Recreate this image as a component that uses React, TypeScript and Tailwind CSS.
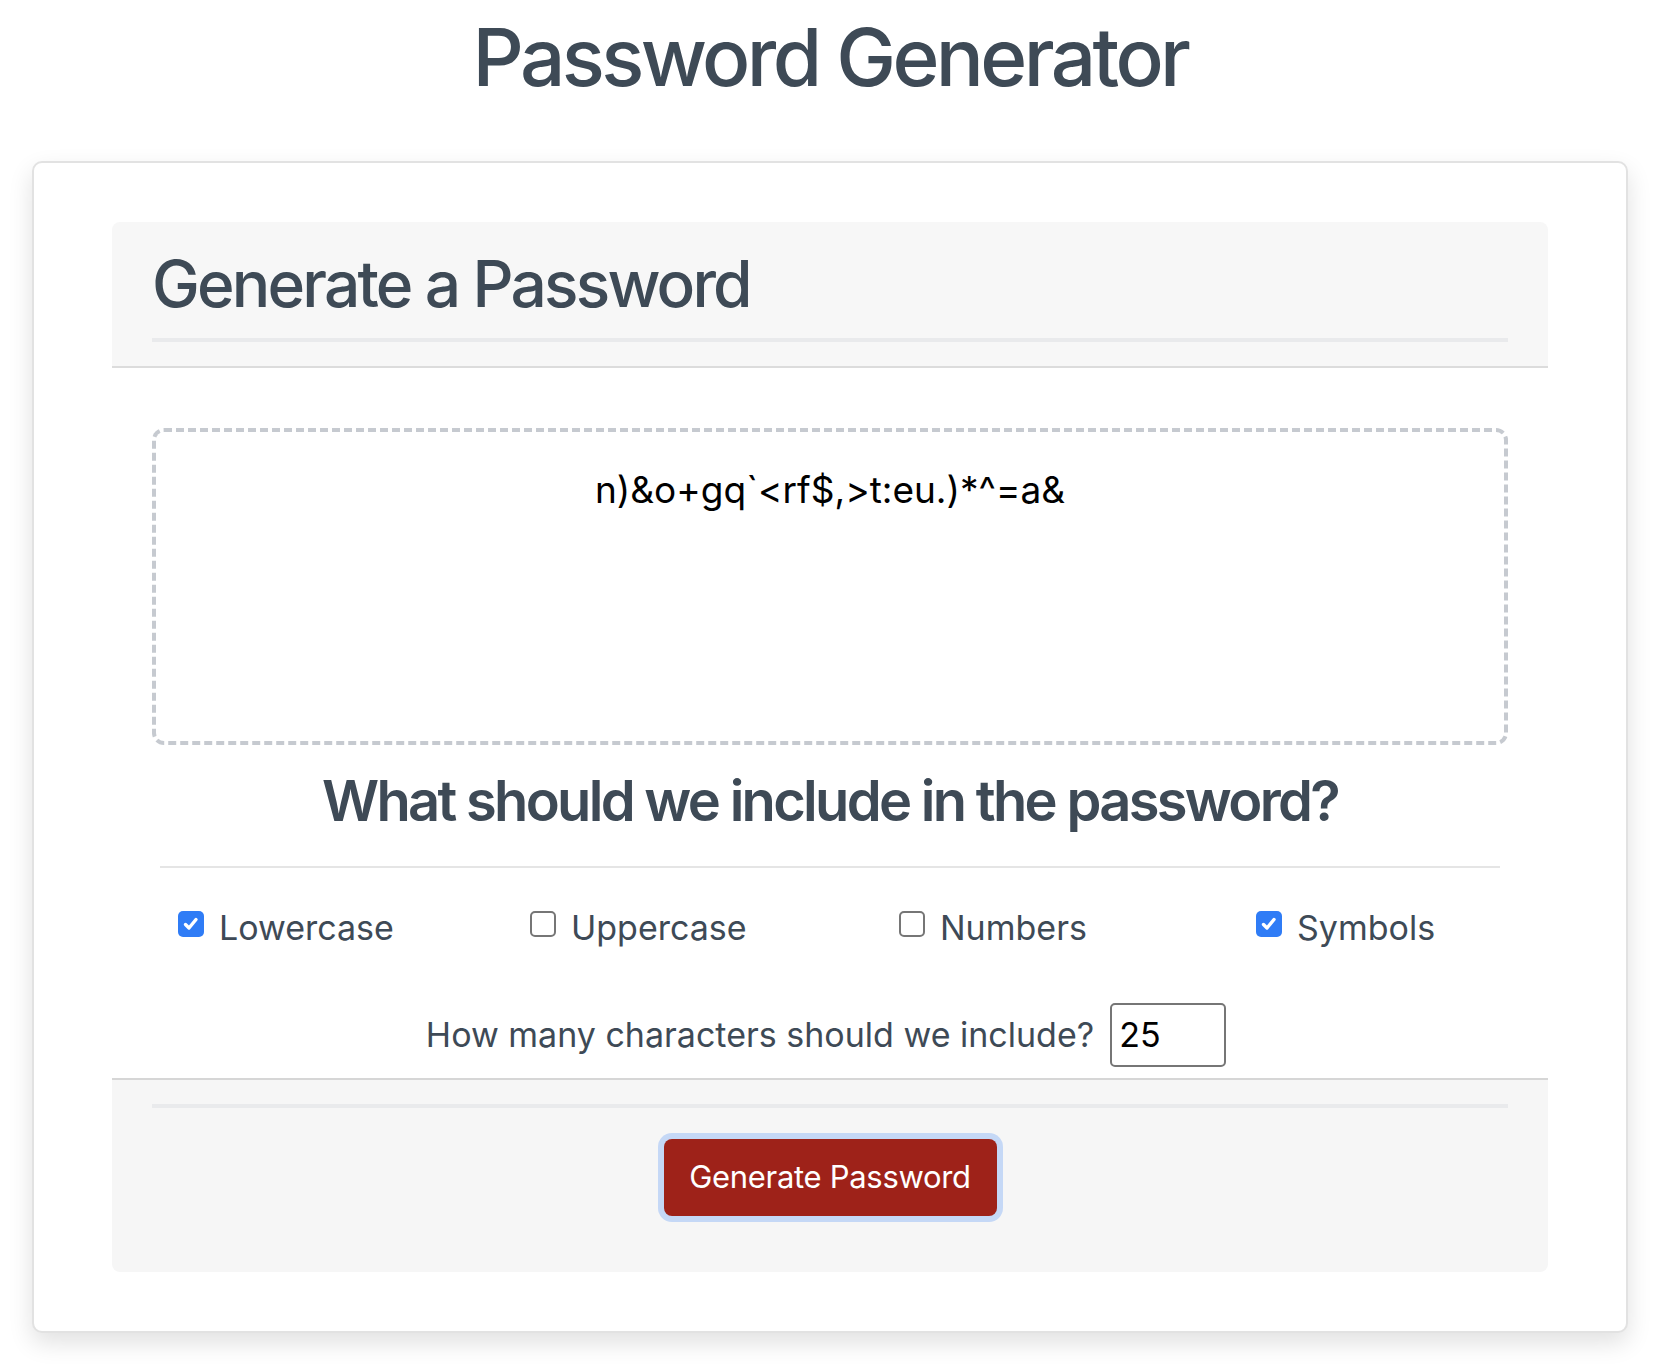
import React from "react";

const options = [
  { label: "Lowercase", checked: true },
  { label: "Uppercase", checked: false },
  { label: "Numbers", checked: false },
  { label: "Symbols", checked: true },
];

function Check({ checked }: { checked: boolean }) {
  if (checked) {
    return (
      <span className="mt-[9px] flex h-[26px] w-[26px] shrink-0 items-center justify-center rounded-[5px] bg-[#2f7cf6]">
        <svg width="18" height="18" viewBox="0 0 18 18" fill="none">
          <path d="M3.5 9.5l3.5 3.5 7-8.5" stroke="white" strokeWidth="3.4" strokeLinecap="round" strokeLinejoin="round" />
        </svg>
      </span>
    );
  }
  return <span className="mt-[9px] h-[26px] w-[26px] shrink-0 rounded-[5px] border-2 border-[#767676] bg-white" />;
}

export default function App() {
  const [length, setLength] = React.useState("25");

  return (
    <div className="min-h-screen bg-white pb-8 font-['Inter','Helvetica',sans-serif] text-[#3e4a56]">
      <h1 className="pt-[9px] text-center text-[80px] font-medium leading-[1.2] tracking-[-0.045em]">Password Generator</h1>

      <div className="mx-[32px] mt-[56px] rounded-[10px] border-2 border-[#e2e2e2] bg-white px-[78px] py-[59px] shadow-[0_10px_24px_rgba(0,0,0,0.12)]">
        {/* header */}
        <div className="rounded-t-[8px] border-b-2 border-[#dcdcdc] bg-[#f7f7f7] px-10 pt-[24px] pb-[24px]">
          <h2 className="text-[64px] font-medium leading-[1.2] tracking-[-0.044em]">Generate a Password</h2>
          <div className="mt-[15px] h-[4px] bg-[#e9eaec]" />
        </div>

        {/* body */}
        <div className="px-10 pt-[60px] pb-[11px]">
          <div className="h-[317px] rounded-xl border-4 border-dashed border-[#c6cad0] pt-[31px] text-center text-[37px] leading-[1.46] text-black">
            n)&amp;o+gq`&lt;rf$,&gt;t:eu.)*^=a&amp;
          </div>

          <h3 className="mt-[23px] text-center text-[56px] font-semibold leading-[1.2] tracking-[-0.048em]">What should we include in the password?</h3>
          <div className="mx-2 mt-[31px] h-[2px] bg-[#e5e5e5]" />

          <div className="mt-[34px] grid grid-cols-[352px_369px_357px_1fr] pl-[26px]">
            {options.map((o) => (
              <label key={o.label} className="flex items-start gap-[15px] text-[34px] leading-[1.5]">
                <Check checked={o.checked} />
                <span>{o.label}</span>
              </label>
            ))}
          </div>

          <div className="mt-[50px] flex items-center justify-center gap-[16px] pr-[8px]">
            <span className="text-[34px] leading-[1.5]">How many characters should we include?</span>
            <input
              value={length}
              onChange={(e) => setLength(e.target.value)}
              className="h-[64px] w-[116px] rounded-[5px] border-2 border-[#767676] pl-[7px] text-[34px] text-black outline-none"
            />
          </div>
        </div>

        {/* footer */}
        <div className="rounded-b-[8px] border-t-2 border-[#d6d6d6] bg-[#f6f6f6] px-10 pt-[24px] pb-[56px]">
          <div className="h-[4px] bg-[#e9eaec]" />
          <div className="mt-[31px] flex justify-center">
            <button className="h-[77px] w-[333px] rounded-[8px] bg-[#9e2219] text-[31px] tracking-[-0.01em] text-white ring-[6px] ring-[#c5d8f6]">
              Generate Password
            </button>
          </div>
        </div>
      </div>
    </div>
  );
}
